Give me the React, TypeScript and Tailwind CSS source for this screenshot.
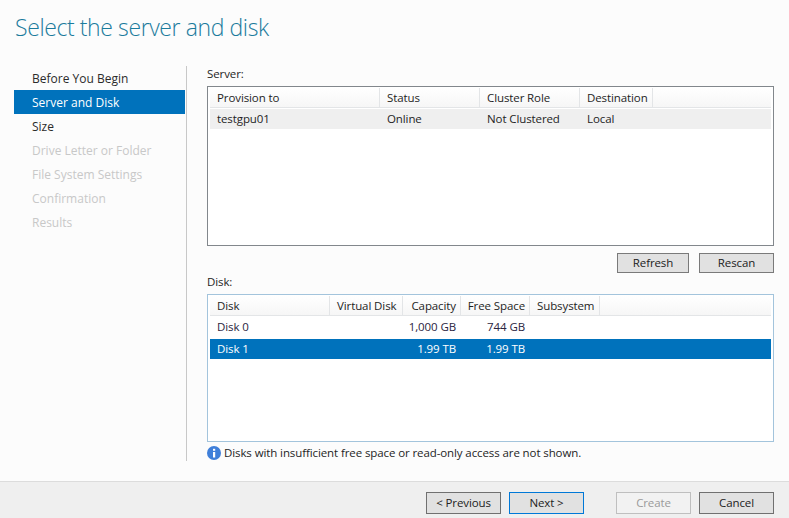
const font = { fontFamily: '"Open Sans", "Noto Sans", sans-serif' };

const steps = [
  { label: "Before You Begin", state: "normal" },
  { label: "Server and Disk", state: "active" },
  { label: "Size", state: "normal" },
  { label: "Drive Letter or Folder", state: "off" },
  { label: "File System Settings", state: "off" },
  { label: "Confirmation", state: "off" },
  { label: "Results", state: "off" },
];

function Head({ label, w, right }: { label: string; w: string; right?: boolean }) {
  return (
    <div className={`${w} shrink-0 h-full flex items-center pl-[7px] whitespace-nowrap border-r border-[#e3e5e7] ${right ? "justify-end pr-[4px]" : "pr-[6px]"}`}>
      {label}
    </div>
  );
}

function Btn({ label, cls }: { label: string; cls?: string }) {
  return (
    <div className={`shrink-0 flex items-center justify-center border whitespace-nowrap ${cls ?? ""}`}>
      {label}
    </div>
  );
}

export default function App() {
  return (
    <div className="w-[789px] h-[518px] bg-[#fcfcfc] flex flex-col overflow-hidden text-[11.5px] text-[#1e1e1e] tracking-[-0.1px]" style={font}>
      <div className="h-[66px] shrink-0 pl-[15px] pt-[9px] text-[23px] leading-[36px] font-light text-[#1b7b9c] tracking-[-0.4px]">
        Select the server and disk
      </div>

      <div className="flex-1 flex pl-[14px] min-h-0">
        <div className="w-[171px] shrink-0 flex flex-col text-[12px] tracking-normal">
          {steps.map((s) => (
            <div
              key={s.label}
              className={`h-[24px] flex items-center pl-[18px] pt-[1px] whitespace-nowrap ${
                s.state === "active" ? "bg-[#0072bc] text-white" : s.state === "off" ? "text-[#c8c8c8]" : "text-[#2b2b2b]"
              }`}
            >
              {s.label}
            </div>
          ))}
        </div>

        <div className="w-[1px] h-[395px] ml-[1px] bg-[#c8c8c8] shrink-0" />

        <div className="ml-[20px] w-[567px] flex flex-col">
          <div className="h-[20px] flex items-center -mt-[2px]">Server:</div>
          <div className="h-[160px] mt-[2px] border border-[#82878c] bg-white px-[2px] pt-[1px] flex flex-col">
            <div className="h-[20px] flex items-center border-b border-[#e3e5e7] bg-gradient-to-b from-white to-[#f6f6f6] shrink-0">
              <Head label="Provision to" w="w-[170px]" />
              <Head label="Status" w="w-[100px]" />
              <Head label="Cluster Role" w="w-[100px]" />
              <Head label="Destination" w="w-[73px]" />
            </div>
            <div className="h-[20px] mt-[1px] flex items-center bg-[#efefef] shrink-0">
              <div className="w-[170px] px-[7px]">testgpu01</div>
              <div className="w-[100px] px-[7px]">Online</div>
              <div className="w-[100px] px-[7px] whitespace-nowrap">Not Clustered</div>
              <div className="w-[73px] px-[7px]">Local</div>
            </div>
          </div>

          <div className="flex justify-end gap-[10px] mt-[7px]">
            <Btn label="Refresh" cls="w-[72px] h-[20px] border-[#7a7a7a] bg-[#e1e1e1] text-[#222]" />
            <Btn label="Rescan" cls="w-[75px] h-[20px] border-[#7a7a7a] bg-[#e1e1e1] text-[#222]" />
          </div>

          <div className="h-[20px] flex items-center -mt-[1px]">Disk:</div>
          <div className="h-[148px] mt-[2px] border border-[#a3c4dc] bg-white px-[2px] pt-[1px] flex flex-col">
            <div className="h-[20px] flex items-center border-b border-[#e3e5e7] bg-gradient-to-b from-white to-[#f6f6f6] shrink-0">
              <Head label="Disk" w="w-[120px]" />
              <Head label="Virtual Disk" w="w-[73px]" />
              <Head label="Capacity" w="w-[58px]" right />
              <Head label="Free Space" w="w-[69px]" right />
              <Head label="Subsystem" w="w-[70px]" />
            </div>
            <div className="h-[22px] flex items-center shrink-0 text-[#2a2440]">
              <div className="w-[120px] px-[7px]">Disk 0</div>
              <div className="w-[73px]" />
              <div className="w-[58px] pr-[5px] text-right whitespace-nowrap">1,000 GB</div>
              <div className="w-[69px] pr-[5px] text-right whitespace-nowrap">744 GB</div>
            </div>
            <div className="h-[20px] mt-[1px] flex items-center shrink-0 bg-[#0072bc] text-white">
              <div className="w-[120px] px-[7px]">Disk 1</div>
              <div className="w-[73px]" />
              <div className="w-[58px] pr-[5px] text-right whitespace-nowrap">1.99 TB</div>
              <div className="w-[69px] pr-[5px] text-right whitespace-nowrap">1.99 TB</div>
            </div>
          </div>

          <div className="flex items-center mt-[2px] h-[18px] gap-[3px]">
            <svg width="14" height="14" viewBox="0 0 14 14" className="shrink-0">
              <circle cx="7" cy="7" r="7" fill="#3f7fd9" />
              <rect x="6" y="6" width="2.2" height="5.5" fill="#fff" />
              <rect x="6" y="2.8" width="2.2" height="2" fill="#fff" />
            </svg>
            <span className="whitespace-nowrap">Disks with insufficient free space or read-only access are not shown.</span>
          </div>
        </div>
      </div>

      <div className="h-[37px] shrink-0 bg-[#efefef] border-t border-[#dcdcdc] flex items-start pt-[10px] pl-[426px]">
        <Btn label="< Previous" cls="w-[75px] h-[22px] border-[#707070] bg-[#e1e1e1] text-[#222]" />
        <Btn label="Next >" cls="ml-[8px] w-[75px] h-[22px] border-[#0078d7] bg-[#e1e1e1] text-[#222]" />
        <Btn label="Create" cls="ml-[32px] w-[75px] h-[22px] border-[#bfbfbf] bg-[#f2f2f2] text-[#9a9a9a]" />
        <Btn label="Cancel" cls="ml-[8px] w-[75px] h-[22px] border-[#707070] bg-[#e1e1e1] text-[#222]" />
      </div>
    </div>
  );
}
